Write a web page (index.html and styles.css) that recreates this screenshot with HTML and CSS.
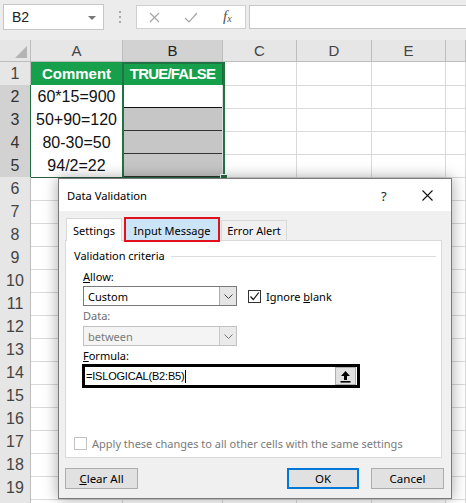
FILE: index.html
```
<!DOCTYPE html>
<html>
<head>
<meta charset="utf-8">
<link rel="stylesheet" href="styles.css">
</head>
<body>
<div class="topbar">
  <div class="namebox"><span>B2</span><span class="nb-arrow"></span></div>
  <div class="dots"><i></i><i></i><i></i></div>
  <div class="fxbox">
    <svg class="ico-x" width="11" height="11" viewBox="0 0 11 11"><path d="M1 1L10 10M10 1L1 10" stroke="#a6a6a6" stroke-width="1.2" fill="none"/></svg>
    <svg class="ico-ok" width="14" height="11" viewBox="0 0 14 11"><path d="M1 6L5 10L13 1" stroke="#a6a6a6" stroke-width="1.2" fill="none"/></svg>
    <span class="fx">f<sub>x</sub></span>
  </div>
  <div class="fbar"></div>
</div>
<div class="sheet">
  <div class="row hdr"><div class="corner"><span class="tri"></span></div><div>A</div><div class="sel">B</div><div>C</div><div>D</div><div>E</div><div></div></div>
  <div class="row"><div class="rh">1</div><div class="h">Comment</div><div class="h h2">TRUE/FALSE</div><div></div><div></div><div></div><div></div></div>
  <div class="row"><div class="rh on">2</div><div class="d">60*15=900</div><div class="w"></div><div></div><div></div><div></div><div></div></div>
  <div class="row"><div class="rh on">3</div><div class="d">50+90=120</div><div class="g"></div><div></div><div></div><div></div><div></div></div>
  <div class="row"><div class="rh on">4</div><div class="d">80-30=50</div><div class="g"></div><div></div><div></div><div></div><div></div></div>
  <div class="row"><div class="rh on">5</div><div class="d">94/2=22</div><div class="g"></div><div></div><div></div><div></div><div></div></div>
  <div class="row"><div class="rh">6</div><div></div><div></div><div></div><div></div><div></div><div></div></div>
  <div class="row"><div class="rh">7</div><div></div><div></div><div></div><div></div><div></div><div></div></div>
  <div class="row"><div class="rh">8</div><div></div><div></div><div></div><div></div><div></div><div></div></div>
  <div class="row"><div class="rh">9</div><div></div><div></div><div></div><div></div><div></div><div></div></div>
  <div class="row"><div class="rh">10</div><div></div><div></div><div></div><div></div><div></div><div></div></div>
  <div class="row"><div class="rh">11</div><div></div><div></div><div></div><div></div><div></div><div></div></div>
  <div class="row"><div class="rh">12</div><div></div><div></div><div></div><div></div><div></div><div></div></div>
  <div class="row"><div class="rh">13</div><div></div><div></div><div></div><div></div><div></div><div></div></div>
  <div class="row"><div class="rh">14</div><div></div><div></div><div></div><div></div><div></div><div></div></div>
  <div class="row"><div class="rh">15</div><div></div><div></div><div></div><div></div><div></div><div></div></div>
  <div class="row"><div class="rh">16</div><div></div><div></div><div></div><div></div><div></div><div></div></div>
  <div class="row"><div class="rh">17</div><div></div><div></div><div></div><div></div><div></div><div></div></div>
  <div class="row"><div class="rh">18</div><div></div><div></div><div></div><div></div><div></div><div></div></div>
  <div class="row"><div class="rh">19</div><div></div><div></div><div></div><div></div><div></div><div></div></div>
  <div class="row"><div class="rh"></div><div></div><div></div><div></div><div></div><div></div><div></div></div>
</div>
<div class="selection"><span class="handle"></span></div>

<div class="dlg">
  <div class="dlg-title">
    <span class="dlg-name">Data Validation</span>
    <span class="help">?</span>
    <svg class="close" width="11" height="11" viewBox="0 0 11 11"><path d="M0.5 0.5L10.5 10.5M10.5 0.5L0.5 10.5" stroke="#111" stroke-width="1.1" fill="none"/></svg>
  </div>
  <div class="tabs">
    <div class="tab active">Settings</div>
    <div class="tab hl">Input Message</div>
    <div class="tab plain">Error Alert</div>
  </div>
  <div class="panel">
    <div class="legend"><span>Validation criteria</span><i></i></div>
    <div class="lbl l-allow"><u>A</u>llow:</div>
    <div class="selrow">
      <div class="combo"><span>Custom</span><span class="cbtn"><svg width="9" height="5" viewBox="0 0 9 5"><path d="M0.5 0.5L4.5 4.5L8.5 0.5" stroke="#444" fill="none"/></svg></span></div>
      <div class="chk"><span class="box"><svg width="11" height="11" viewBox="0 0 11 11"><path d="M1.5 5.5L4.3 8.5L9.8 1.5" stroke="#111" stroke-width="1.2" fill="none"/></svg></span><span>Ignore <u>b</u>lank</span></div>
    </div>
    <div class="lbl dim l-data">Data:</div>
    <div class="combo dis"><span>between</span><span class="cbtn"><svg width="9" height="5" viewBox="0 0 9 5"><path d="M0.5 0.5L4.5 4.5L8.5 0.5" stroke="#777" fill="none"/></svg></span></div>
    <div class="lbl l-form"><u>F</u>ormula:</div>
    <div class="fbox"><span class="ftext">=ISLOGICAL(B2:B5)</span><span class="caret"></span><span class="upl"><svg width="11" height="13" viewBox="0 0 11 13"><path d="M5.5 1L1 6H4V10H7V6H10Z" fill="#000"/><rect x="0.5" y="11" width="10" height="1.6" fill="#000"/></svg></span></div>
    <div class="apply"><span class="box dimbox"></span><span>Apply these changes to all other cells with the same settings</span></div>
  </div>
  <div class="btns">
    <div class="btn"><u>C</u>lear All</div>
    <div class="spacer"></div>
    <div class="btn def">OK</div>
    <div class="btn">Cancel</div>
  </div>
</div>
</body>
</html>
```
FILE: styles.css
```
html,body{margin:0;padding:0;}
body{width:466px;height:503px;overflow:hidden;background:#fff;font-family:"Liberation Sans",Arial,sans-serif;position:relative;}

.topbar{height:40px;background:#ececec;display:flex;align-items:flex-start;box-sizing:border-box;padding-top:4px;}
.namebox{margin-left:3px;width:101px;height:26px;box-sizing:border-box;background:#fff;border:1px solid #c6c6c6;display:flex;align-items:center;padding-left:8px;font-size:14px;color:#222;position:relative;}
.nb-arrow{position:absolute;right:7px;top:11px;width:0;height:0;border-left:4px solid transparent;border-right:4px solid transparent;border-top:4px solid #777;}
.dots{width:32px;height:26px;display:flex;flex-direction:column;align-items:center;justify-content:center;gap:3px;}
.dots i{display:block;width:2px;height:2px;background:#a8a8a8;}
.fxbox{margin-top:1px;width:110px;height:24px;box-sizing:border-box;background:#fff;border:1px solid #d0d0d0;display:flex;align-items:center;position:relative;}
.ico-x{position:absolute;left:12px;top:6px;}
.ico-ok{position:absolute;left:47px;top:6px;}
.fx{position:absolute;left:86px;top:2px;font-family:"Liberation Serif",serif;font-style:italic;font-size:15px;color:#555;}
.fx sub{font-size:10px;vertical-align:-1px;}
.fbar{margin-top:1px;margin-left:3px;flex:1;height:24px;box-sizing:border-box;background:#fff;border:1px solid #c6c6c6;border-right:none;}

.sheet{display:flex;flex-direction:column;}
.row{display:grid;grid-template-columns:31px 92px 100px 74px 75px 74px 20px;height:23px;}
.row>div{box-sizing:border-box;border-right:1px solid #d9d9d9;border-bottom:1px solid #d9d9d9;}
.row.hdr{height:22px;background:#e6e6e6;}
.row.hdr>div{border-right:1px solid #bdbdbd;border-bottom:1px solid #bdbdbd;text-align:center;font-size:15px;line-height:21px;color:#444;}
.row.hdr>div.sel{background:#d2d2d2;color:#222;}
.corner{position:relative;}
.tri{position:absolute;right:3px;bottom:3px;width:0;height:0;border-left:12px solid transparent;border-bottom:12px solid #b4b4b4;}
.row>div.rh{background:#e6e6e6;border-right:1px solid #bdbdbd;border-bottom:1px solid #bdbdbd;text-align:center;font-size:16px;line-height:23px;color:#444;}
.row>div.rh.on{background:#d2d2d2;color:#333;}
.row>div.h{background:#17a04b;color:#fff;font-weight:bold;font-size:15px;line-height:23px;text-align:center;border-right:1px solid #1d6b3c;border-bottom:1px solid #1d6b3c;}
.row>div.h2{letter-spacing:-0.8px;}
.row>div.d{background:#fff;color:#111;font-size:16px;line-height:23px;text-align:center;border-right:1px solid #2e5e40;border-bottom:1px solid #2e5e40;}
.row>div.w{background:#fff;border-bottom:1px solid #111;box-shadow:inset 0 -1px 0 #111;}
.row>div.g{background:#c6c6c6;border-bottom:1px solid #111;box-shadow:inset 0 -1px 0 #333;}
.row>div.h:first-of-type,.row>div.d{box-shadow:-1px 0 0 #1d6b3c;}

.selection{position:absolute;left:122px;top:62px;width:103px;height:117px;box-sizing:border-box;border:2px solid #217346;}
.handle{position:absolute;right:-5px;bottom:-5px;width:6px;height:6px;background:#217346;border:1px solid #fff;}

.dlg{position:absolute;left:58px;top:178px;width:394px;height:321px;box-sizing:border-box;border:1px solid #7a7a7a;background:#f0f0f0;box-shadow:0 0 14px rgba(0,0,0,.35);font-family:"Noto Sans","Open Sans",sans-serif;font-size:11px;color:#000;display:flex;flex-direction:column;}
.dlg-title{height:32px;background:#fff;display:flex;align-items:center;position:relative;}
.dlg-name{margin-left:8px;font-size:11.2px;}
.help{position:absolute;left:322px;top:8px;font-size:13px;color:#222;}
.close{position:absolute;left:363px;top:11px;}
.tabs{margin-top:7px;height:22px;display:flex;align-items:flex-end;padding-left:7px;position:relative;z-index:2;}
.tab{box-sizing:border-box;display:flex;align-items:center;justify-content:center;}
.tab.active{width:56px;height:23px;margin-bottom:-1px;background:#fff;border:1px solid #d9d9d9;border-bottom:none;}
.tab.hl{width:96px;height:25px;margin-left:2px;margin-bottom:-2px;background:#cce4f7;border:2px solid #e0101c;padding-top:1px;}
.tab.plain{width:66px;height:20px;margin-left:1px;background:#f0f0f0;border:1px solid #d9d9d9;border-bottom:none;}
.panel{margin-left:6px;width:377px;height:218px;box-sizing:border-box;background:#fff;border:1px solid #d9d9d9;display:flex;flex-direction:column;padding-left:8px;}
.legend{margin-top:8px;height:14px;display:flex;align-items:center;padding-right:5px;}
.legend span{white-space:nowrap;line-height:14px;}
.legend i{flex:1;height:1px;background:#dcdcdc;margin-left:6px;}
.lbl{height:14px;line-height:14px;margin-left:9px;}
.lbl.dim{color:#6d6d6d;}
.l-allow{margin-top:7px;}
.l-data{margin-top:3px;}
.l-form{margin-top:3px;}
.selrow{margin-top:2px;display:flex;align-items:center;margin-left:9px;}
.combo{width:154px;height:20px;box-sizing:border-box;border:1px solid #7a7a7a;background:#fff;display:flex;align-items:center;justify-content:space-between;padding-left:4px;}
.combo.dis{margin-top:3px;margin-left:9px;border-color:#c2c2c2;background:#f4f4f4;color:#7a7a7a;}
.cbtn{width:17px;height:18px;box-sizing:border-box;border-left:1px solid #adadad;background:#e5e5e5;display:flex;align-items:center;justify-content:center;}
.combo.dis .cbtn{border-left-color:#c8c8c8;background:#eaeaea;}
.chk{display:flex;align-items:center;margin-left:11px;gap:5px;font-size:11px;}
.box{width:13px;height:13px;box-sizing:border-box;border:1px solid #333;background:#fff;display:flex;align-items:center;justify-content:center;}
.fbox{margin-top:1px;margin-left:8px;width:278px;height:24px;box-sizing:border-box;border:3px solid #000;background:#fff;display:flex;align-items:center;padding-left:1px;}
.ftext{font-family:"Liberation Sans",Arial,sans-serif;font-size:11px;letter-spacing:-0.2px;}
.caret{width:1px;height:13px;background:#000;margin-left:1px;}
.upl{margin-left:auto;margin-right:1px;width:21px;height:18px;box-sizing:border-box;border:1px solid #adadad;background:#e1e1e1;display:flex;align-items:center;justify-content:center;}
.apply{margin-top:48px;display:flex;align-items:center;gap:5px;color:#7a7a7a;font-size:11px;}
.dimbox{border-color:#c2c2c2;}
.btns{margin-top:10px;height:21px;display:flex;padding-left:6px;padding-right:7px;}
.btn{width:73px;height:21px;box-sizing:border-box;border:1px solid #adadad;background:#e1e1e1;display:flex;align-items:center;justify-content:center;font-size:11.5px;}
.btn.def{width:72px;border:2px solid #0078d7;margin-right:12px;}
.spacer{flex:1;}
```
